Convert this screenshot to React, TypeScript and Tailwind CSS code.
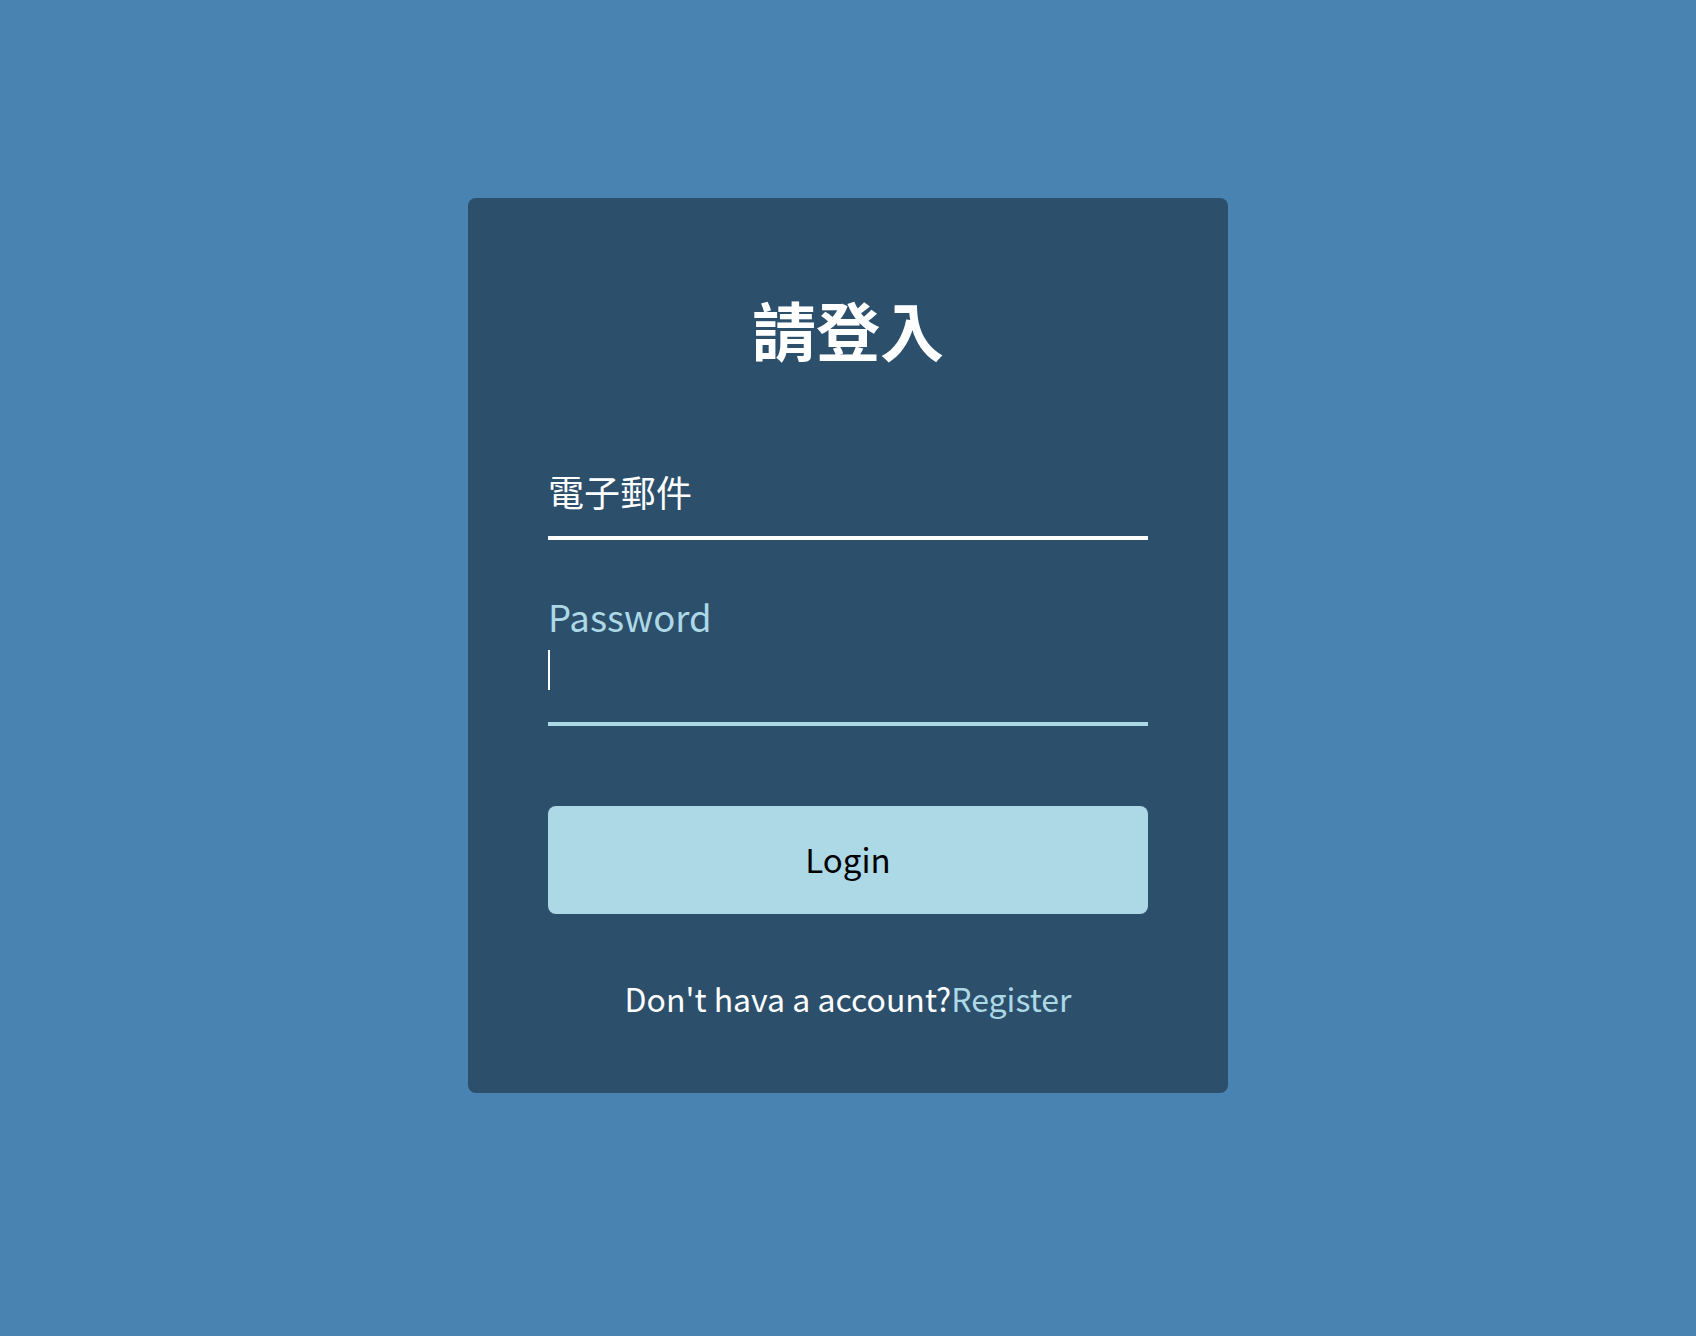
export default function App() {
  return (
    <div className="min-h-screen bg-[#4883b2] flex justify-center pt-[198px] font-['Noto_Sans_CJK_TC','Noto_Sans',sans-serif]">
      <div className="w-[760px] h-[895px] rounded-lg bg-[#2c4f6c] px-[80px] pt-[98px] flex flex-col">
        <h1 className="text-[64px] leading-none font-bold text-white text-center">請登入</h1>

        {/* email field */}
        <div className="mt-[113px] pb-[27px] border-b-4 border-white">
          <span className="block text-[36px] leading-none text-white">電子郵件</span>
        </div>

        {/* password field (focused) */}
        <div className="mt-[59px] border-b-4 border-[#add8e6]">
          <label className="block text-[36.5px] leading-none text-[#add8e6]">Password</label>
          <div className="mt-[14px] mb-[32px] h-[40px] w-[2px] bg-white" />
        </div>

        <button className="mt-[80px] h-[108px] w-full rounded-lg bg-[#add8e6] text-[33px] text-black">
          Login
        </button>

        <p className="mt-[68px] text-center text-[32px] leading-none text-white">
          Don't hava a account?<span className="text-[#add8e6]">Register</span>
        </p>
      </div>
    </div>
  );
}
